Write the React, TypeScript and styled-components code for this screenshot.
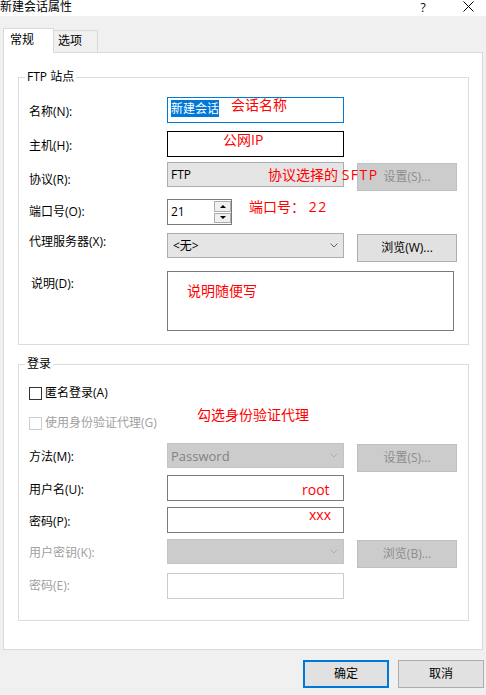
import React from "react";
import styled, { createGlobalStyle } from "styled-components";

const UI_FONT = `"Open Sans", "Noto Sans CJK SC", sans-serif`;

const GlobalStyle = createGlobalStyle`
  html, body { margin: 0; padding: 0; background: #f0f0f0; }
  body { font-family: ${UI_FONT}; font-size: 12px; color: #000; }
  * { box-sizing: border-box; }
`;

const Window = styled.div`
  position: relative;
  width: 486px;
  height: 695px;
  overflow: hidden;
  background: #f0f0f0;
  display: flex;
  flex-direction: column;
`;

const TitleBar = styled.div`
  height: 16px;
  flex-shrink: 0;
  background: #fff;
  display: flex;
  align-items: flex-start;
`;

const Title = styled.div`
  flex: 1;
  font-size: 12px;
  line-height: 13px;
  white-space: nowrap;
`;

const HelpGlyph = styled.div`
  width: 10px;
  font-size: 12px;
  line-height: 13px;
  text-align: center;
  margin-top: 1px;
  margin-right: 35px;
`;

const CloseIcon = styled.svg`
  width: 11px;
  height: 11px;
  margin-top: 1px;
  margin-right: 12px;
`;

const TabStrip = styled.div`
  position: relative;
  z-index: 1;
  display: flex;
  align-items: flex-start;
  height: 24px;
  margin-top: 12px;
  padding-left: 3px;
`;

const Tab = styled.div<{ $active?: boolean }>`
  width: ${(p) => (p.$active ? 51 : 45)}px;
  height: ${(p) => (p.$active ? 25 : 22)}px;
  margin-top: ${(p) => (p.$active ? 0 : 2)}px;
  margin-left: ${(p) => (p.$active ? 0 : -1)}px;
  padding: ${(p) => (p.$active ? "3px 0 0 6px" : "2px 0 0 4px")};
  background: ${(p) => (p.$active ? "#fff" : "#f0f0f0")};
  border: 1px solid #d9d9d9;
  border-bottom: none;
  line-height: 16px;
  white-space: nowrap;
`;

const Panel = styled.div`
  margin-left: 3px;
  width: 480px;
  height: 598px;
  background: #fff;
  border: 1px solid #d9d9d9;
  padding: 24px 0 0 14px;
  flex-shrink: 0;
`;

const Group = styled.div<{ $h: number; $mt?: number }>`
  position: relative;
  width: 451px;
  height: ${(p) => p.$h}px;
  margin-top: ${(p) => p.$mt ?? 0}px;
  border: 1px solid #dcdcdc;
  padding-left: 10px;
  display: flex;
  flex-direction: column;
`;

const Legend = styled.div`
  position: absolute;
  top: -9px;
  left: 6px;
  padding: 0 2px;
  background: #fff;
  line-height: 16px;
  white-space: nowrap;
`;

const Row = styled.div<{ $mt: number }>`
  display: flex;
  align-items: flex-start;
  margin-top: ${(p) => p.$mt}px;
`;

const FieldLabel = styled.div<{ $pt: number; $disabled?: boolean; $indent?: number }>`
  width: 138px;
  flex-shrink: 0;
  padding-top: ${(p) => p.$pt}px;
  padding-left: ${(p) => p.$indent ?? 0}px;
  line-height: 16px;
  white-space: nowrap;
  color: ${(p) => (p.$disabled ? "#a0a0a0" : "#000")};
`;

type Tone = "focus" | "hover" | "normal" | "disabled";
const toneColor: Record<Tone, string> = {
  focus: "#0078d7",
  hover: "#000000",
  normal: "#7a7a7a",
  disabled: "#cccccc",
};

const TextBox = styled.div<{ $tone: Tone; $w?: number; $h?: number }>`
  width: ${(p) => p.$w ?? 177}px;
  height: ${(p) => p.$h ?? 26}px;
  flex-shrink: 0;
  background: #fff;
  border: 1px solid ${(p) => toneColor[p.$tone]};
  padding: 0 3px;
  display: flex;
  align-items: center;
  line-height: 16px;
`;

const Selection = styled.span`
  background: #0078d7;
  color: #fff;
  line-height: 17px;
  height: 17px;
  margin-top: -3px;
  white-space: nowrap;
`;

const Combo = styled.div<{ $disabled?: boolean }>`
  width: 177px;
  height: 25px;
  flex-shrink: 0;
  background: ${(p) => (p.$disabled ? "#cccccc" : "#e5e5e5")};
  border: 1px solid ${(p) => (p.$disabled ? "#c4c4c4" : "#adadad")};
  padding: 0 5px 0 3px;
  display: flex;
  align-items: center;
  justify-content: space-between;
  line-height: 16px;
  color: ${(p) => (p.$disabled ? "#838383" : "#000")};
`;

const ComboText = styled.span<{ $size?: number; $pl?: number }>`
  font-size: ${(p) => p.$size ?? 12}px;
  padding-left: ${(p) => p.$pl ?? 0}px;
  white-space: nowrap;
`;

const Chevron = ({ color }: { color: string }) => (
  <svg width="8" height="5" viewBox="0 0 8 5">
    <polyline points="0.5,0.5 4,4 7.5,0.5" fill="none" stroke={color} strokeWidth="1" />
  </svg>
);

const PushButton = styled.div<{ $disabled?: boolean; $dy?: number }>`
  width: 100px;
  height: 28px;
  flex-shrink: 0;
  margin-left: 13px;
  margin-top: ${(p) => p.$dy ?? 0}px;
  background: ${(p) => (p.$disabled ? "#cccccc" : "#e1e1e1")};
  border: 1px solid ${(p) => (p.$disabled ? "#bfbfbf" : "#adadad")};
  color: ${(p) => (p.$disabled ? "#8c8c8c" : "#000")};
  display: flex;
  align-items: center;
  justify-content: center;
  line-height: 16px;
  white-space: nowrap;
`;

const SpinBox = styled.div`
  width: 65px;
  height: 26px;
  flex-shrink: 0;
  border: 1px solid #7a7a7a;
  background: #fff;
  display: flex;
  align-items: center;
  padding-left: 3px;
  line-height: 16px;
`;

const SpinValue = styled.span`
  flex: 1;
`;

const SpinColumn = styled.div`
  width: 17px;
  height: 100%;
  padding: 1px 0;
  display: flex;
  flex-direction: column;
  gap: 1px;
`;

const SpinButton = styled.div`
  flex: 1;
  border: 1px solid #adadad;
  background: #f0f0f0;
  display: flex;
  align-items: center;
  justify-content: center;
`;

const TriUp = styled.div`
  width: 0;
  height: 0;
  border-left: 3px solid transparent;
  border-right: 3px solid transparent;
  border-bottom: 3px solid #000;
`;

const TriDown = styled.div`
  width: 0;
  height: 0;
  border-left: 3px solid transparent;
  border-right: 3px solid transparent;
  border-top: 3px solid #000;
`;

const CheckRow = styled.div<{ $mt: number; $disabled?: boolean }>`
  display: flex;
  align-items: center;
  height: 16px;
  margin-top: ${(p) => p.$mt}px;
  color: ${(p) => (p.$disabled ? "#a0a0a0" : "#000")};
  line-height: 16px;
  white-space: nowrap;
`;

const CheckBox = styled.div<{ $disabled?: boolean }>`
  width: 13px;
  height: 13px;
  flex-shrink: 0;
  margin-right: 3px;
  background: #fff;
  border: 1px solid ${(p) => (p.$disabled ? "#cccccc" : "#333333")};
`;

const Footer = styled.div`
  display: flex;
  justify-content: flex-end;
  gap: 9px;
  margin-top: 10px;
  padding-right: 2px;
`;

const DialogButton = styled.div<{ $default?: boolean }>`
  width: 86px;
  height: 28px;
  background: #e1e1e1;
  border: ${(p) => (p.$default ? "2px solid #0078d7" : "1px solid #adadad")};
  display: flex;
  align-items: center;
  justify-content: center;
  line-height: 16px;
`;

const Note = styled.div<{ $x: number; $y: number }>`
  position: absolute;
  left: ${(p) => p.$x}px;
  top: ${(p) => p.$y}px;
  font-size: 14px;
  line-height: 20px;
  color: #ff0000;
  white-space: pre;
  z-index: 2;
`;

const Spaced = styled.span`
  letter-spacing: 1.5px;
`;

export default function App() {
  return (
    <>
      <GlobalStyle />
      <Window>
        <TitleBar>
          <Title>新建会话属性</Title>
          <HelpGlyph>?</HelpGlyph>
          <CloseIcon viewBox="0 0 11 11">
            <line x1="0.5" y1="0.5" x2="10.5" y2="10.5" stroke="#000" strokeWidth="1" />
            <line x1="10.5" y1="0.5" x2="0.5" y2="10.5" stroke="#000" strokeWidth="1" />
          </CloseIcon>
        </TitleBar>

        <TabStrip>
          <Tab $active>常规</Tab>
          <Tab>选项</Tab>
        </TabStrip>

        <Panel>
          <Group $h={268}>
            <Legend>FTP 站点</Legend>
            <Row $mt={19}>
              <FieldLabel $pt={7}>名称(N):</FieldLabel>
              <TextBox $tone="focus">
                <Selection>新建会话</Selection>
              </TextBox>
            </Row>
            <Row $mt={8}>
              <FieldLabel $pt={7}>主机(H):</FieldLabel>
              <TextBox $tone="hover" />
            </Row>
            <Row $mt={5}>
              <FieldLabel $pt={10}>协议(R):</FieldLabel>
              <Combo>
                <ComboText>FTP</ComboText>
              </Combo>
              <PushButton $disabled $dy={1}>设置(S)...</PushButton>
            </Row>
            <Row $mt={8}>
              <FieldLabel $pt={5}>端口号(O):</FieldLabel>
              <SpinBox>
                <SpinValue>21</SpinValue>
                <SpinColumn>
                  <SpinButton>
                    <TriUp />
                  </SpinButton>
                  <SpinButton>
                    <TriDown />
                  </SpinButton>
                </SpinColumn>
              </SpinBox>
            </Row>
            <Row $mt={8}>
              <FieldLabel $pt={1}>代理服务器(X):</FieldLabel>
              <Combo>
                <ComboText $pl={2}>&lt;无&gt;</ComboText>
                <Chevron color="#606060" />
              </Combo>
              <PushButton $dy={1}>浏览(W)...</PushButton>
            </Row>
            <Row $mt={9}>
              <FieldLabel $pt={5} $indent={2}>说明(D):</FieldLabel>
              <TextBox $tone="normal" $w={287} $h={60} />
            </Row>
          </Group>

          <Group $h={257} $mt={19}>
            <Legend>登录</Legend>
            <CheckRow $mt={20}>
              <CheckBox />
              匿名登录(A)
            </CheckRow>
            <CheckRow $mt={14} $disabled>
              <CheckBox $disabled />
              使用身份验证代理(G)
            </CheckRow>
            <Row $mt={12}>
              <FieldLabel $pt={6}>方法(M):</FieldLabel>
              <Combo $disabled>
                <ComboText $size={13}>Password</ComboText>
                <Chevron color="#b0b0b0" />
              </Combo>
              <PushButton $disabled $dy={1}>设置(S)...</PushButton>
            </Row>
            <Row $mt={3}>
              <FieldLabel $pt={7}>用户名(U):</FieldLabel>
              <TextBox $tone="normal" />
            </Row>
            <Row $mt={6}>
              <FieldLabel $pt={7}>密码(P):</FieldLabel>
              <TextBox $tone="normal" />
            </Row>
            <Row $mt={6}>
              <FieldLabel $pt={6} $disabled>用户密钥(K):</FieldLabel>
              <Combo $disabled>
                <span />
                <Chevron color="#b0b0b0" />
              </Combo>
              <PushButton $disabled $dy={1}>浏览(B)...</PushButton>
            </Row>
            <Row $mt={5}>
              <FieldLabel $pt={5} $disabled>密码(E):</FieldLabel>
              <TextBox $tone="disabled" />
            </Row>
          </Group>
        </Panel>

        <Footer>
          <DialogButton $default>确定</DialogButton>
          <DialogButton>取消</DialogButton>
        </Footer>

        <Note $x={231} $y={95}>会话名称</Note>
        <Note $x={223} $y={130}>公网IP</Note>
        <Note $x={268} $y={165}>
          协议选择的 <Spaced>SFTP</Spaced>
        </Note>
        <Note $x={249} $y={197}>
          端口号： <Spaced>22</Spaced>
        </Note>
        <Note $x={187} $y={281}>说明随便写</Note>
        <Note $x={197} $y={405}>勾选身份验证代理</Note>
        <Note $x={302} $y={480}>root</Note>
        <Note $x={309} $y={505}>xxx</Note>
      </Window>
    </>
  );
}
